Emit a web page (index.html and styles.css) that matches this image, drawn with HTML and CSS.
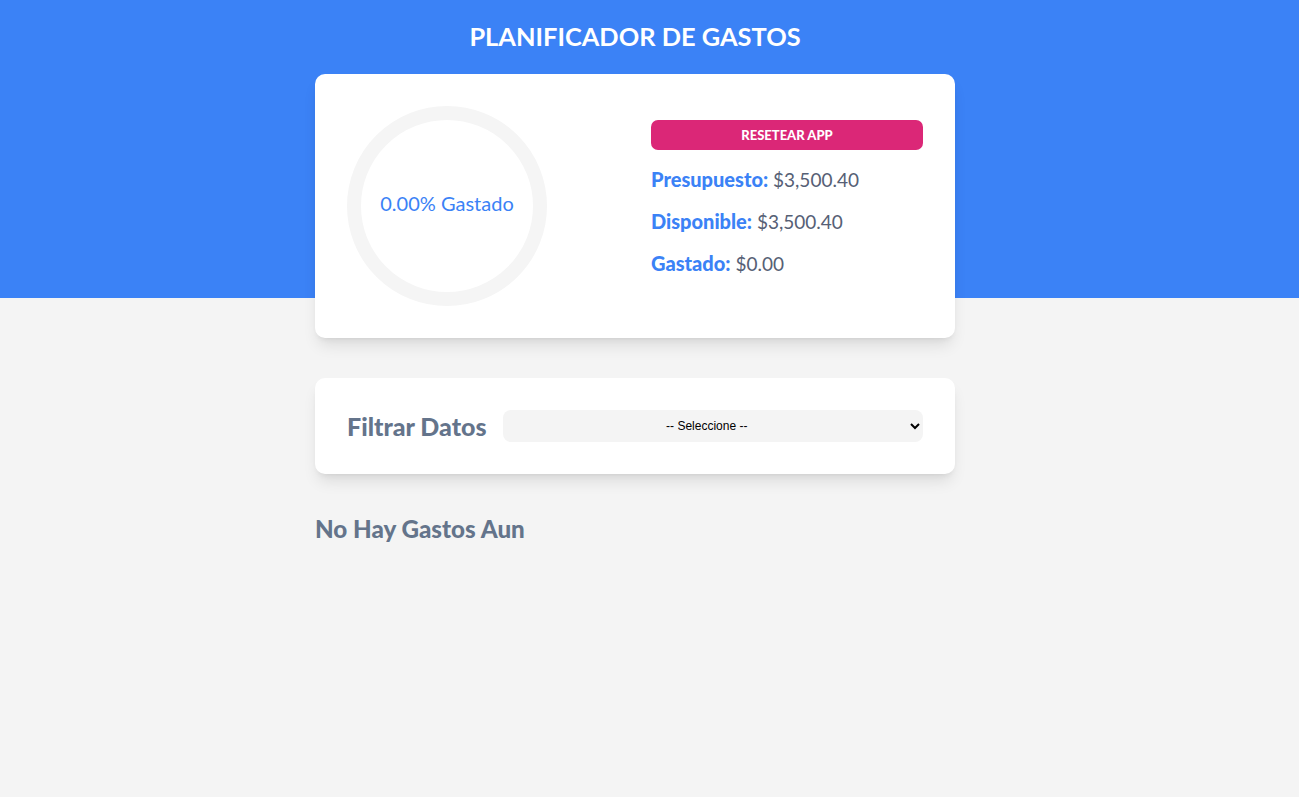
FILE: index.html
```html
<!DOCTYPE html>
<html lang="es">
<head>
<meta charset="utf-8">
<title>Planificador de Gastos</title>
<link rel="stylesheet" href="styles.css">
</head>
<body>
<div class="page">
  <header class="header">
    <h1 class="title">Planificador de Gastos</h1>
  </header>
  <main class="container">
    <section class="card budget">
      <div class="chart">
        <svg class="ring" width="200" height="200" viewBox="0 0 200 200">
          <circle cx="100" cy="100" r="93" fill="none" stroke="#f5f5f5" stroke-width="14"/>
        </svg>
        <span class="chart-label">0.00% Gastado</span>
      </div>
      <div class="summary">
        <button class="reset-btn" type="button">Resetear App</button>
        <p class="line"><span class="label">Presupuesto:</span> $3,500.40</p>
        <p class="line"><span class="label">Disponible:</span> $3,500.40</p>
        <p class="line"><span class="label">Gastado:</span> $0.00</p>
      </div>
    </section>
    <section class="card filter">
      <label class="filter-label" for="cat">Filtrar Datos</label>
      <select id="cat" class="filter-select">
        <option>-- Seleccione --</option>
      </select>
    </section>
    <h2 class="empty">No Hay Gastos Aun</h2>
  </main>
</div>
</body>
</html>
```
FILE: styles.css
```css
* { box-sizing: border-box; }
html, body { margin: 0; padding: 0; }
body {
  font-family: Lato, "Open Sans", sans-serif;
  background: #f4f4f4;
  min-height: 797px;
}
.page {
  min-height: 797px;
  padding-right: 29px;
  background: linear-gradient(to bottom, #3b82f6 0, #3b82f6 298px, #f4f4f4 298px);
}
.header {
  padding-top: 20px;
}
.title {
  margin: 0;
  text-align: center;
  color: #ffffff;
  text-transform: uppercase;
  font-size: 25.4px;
  line-height: 32px;
  font-weight: 700;
}
.container {
  width: 640px;
  margin: 22px auto 0;
  display: flex;
  flex-direction: column;
}
.card {
  background: #ffffff;
  border-radius: 10px;
  box-shadow: 0 10px 15px -3px rgba(0,0,0,0.1), 0 4px 6px -4px rgba(0,0,0,0.1);
  padding: 32px;
}
.budget {
  display: grid;
  grid-template-columns: 1fr 1fr;
  column-gap: 32px;
}
.chart {
  width: 200px;
  height: 200px;
  display: grid;
  place-items: center;
}
.ring, .chart-label { grid-area: 1 / 1; }
.chart-label {
  color: #3b82f6;
  font-size: 20px;
  margin-bottom: 6px;
}
.summary {
  display: flex;
  flex-direction: column;
  padding-top: 14px;
}
.reset-btn {
  width: 100%;
  height: 30px;
  border: none;
  border-radius: 7px;
  background: #db2777;
  color: #ffffff;
  font-family: Lato, sans-serif;
  font-weight: 900;
  font-size: 13px;
  text-transform: uppercase;
}
.line {
  margin: 0;
  margin-top: 17px;
  font-size: 19px;
  line-height: 24px;
  font-weight: 400;
  color: #566075;
}
.label {
  color: #3b82f6;
  font-weight: 900;
  font-size: 20px;
}
.filter {
  margin-top: 40px;
  display: flex;
  align-items: center;
  gap: 16px;
}
.filter-label {
  color: #64748b;
  font-weight: 900;
  font-size: 25px;
  white-space: nowrap;
}
.filter-select {
  flex: 1;
  height: 32px;
  border: none;
  border-radius: 8px;
  background: #f4f4f4;
  text-align: center;
  font-family: "Liberation Sans", Arial, sans-serif;
  font-size: 12px;
  color: #000;
  padding: 0 6px;
}
.empty {
  margin: 40px 0 0;
  color: #64748b;
  font-size: 24.2px;
  line-height: 30px;
  font-weight: 900;
}
```
